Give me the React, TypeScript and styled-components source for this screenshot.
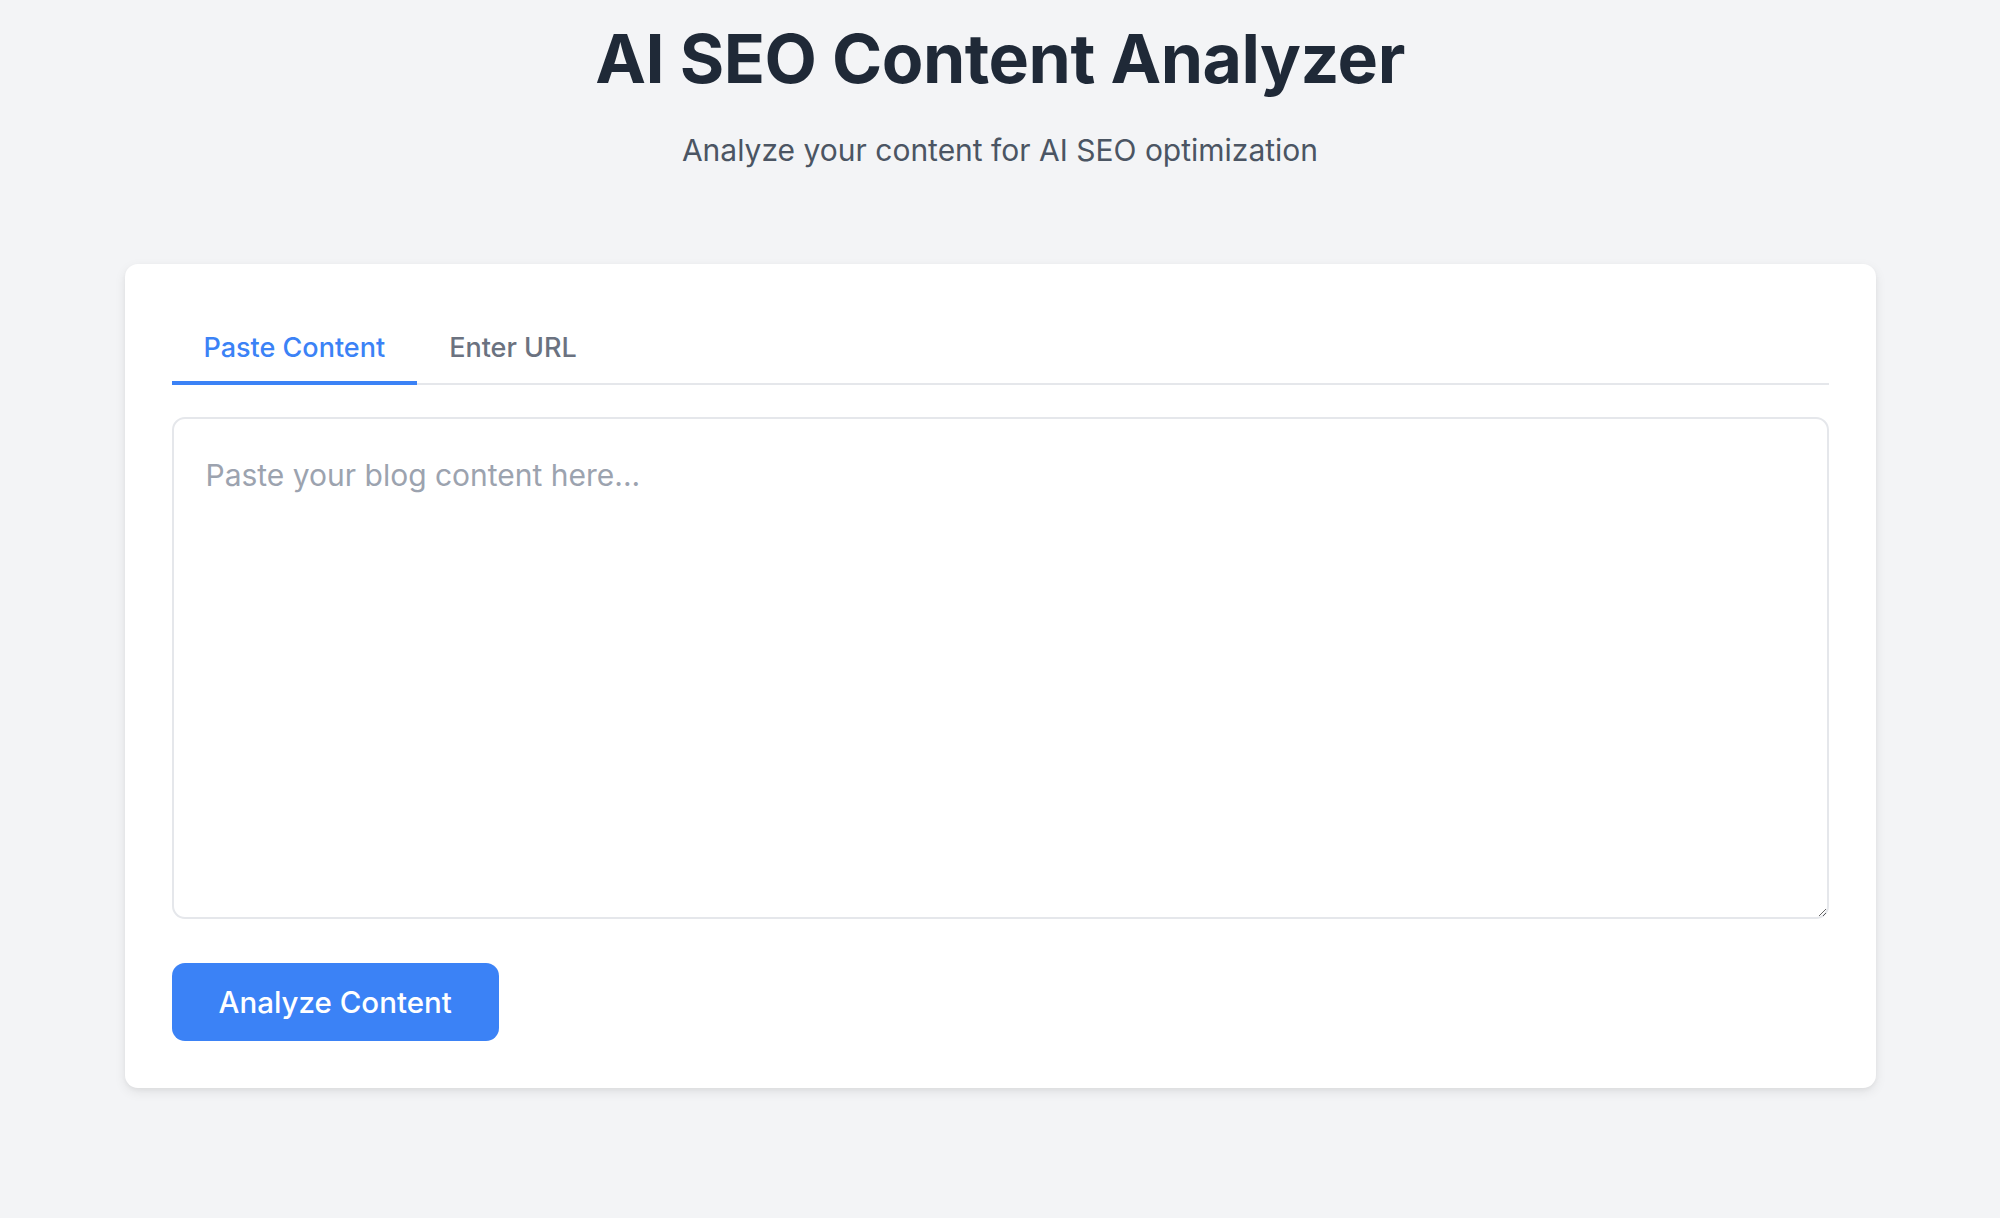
import { FC, useState } from "react";
import styled, { createGlobalStyle } from "styled-components";

const GlobalStyle = createGlobalStyle`
  html, body {
    margin: 0;
    padding: 0;
    background-color: #f3f4f6;
    font-family: Inter, "Noto Sans", "Liberation Sans", sans-serif;
  }
  * {
    box-sizing: border-box;
  }
`;

const Page = styled.div`
  min-height: 1218px;
  display: flex;
  flex-direction: column;
  align-items: center;
  padding: 16px 0 0;
`;

const Header = styled.header`
  display: flex;
  flex-direction: column;
  align-items: center;
  margin-bottom: 94px;
`;

const Title = styled.h1`
  margin: 0;
  font-size: 68px;
  line-height: 84px;
  font-weight: 700;
  letter-spacing: -0.5px;
  color: #1f2937;
`;

const Subtitle = styled.p`
  margin: 30px 0 0;
  font-size: 30px;
  line-height: 40px;
  font-weight: 400;
  color: #4b5563;
`;

const Card = styled.section`
  width: 1751px;
  background-color: #ffffff;
  border-radius: 13px;
  box-shadow: 0 4px 12px rgba(0, 0, 0, 0.08), 0 2px 4px rgba(0, 0, 0, 0.04);
  padding: 47px;
  display: flex;
  flex-direction: column;
  align-items: flex-start;
`;

const TabBar = styled.div`
  width: 100%;
  display: flex;
  border-bottom: 2px solid #e5e7eb;
  margin-bottom: 32px;
`;

const Tab = styled.button<{ $active?: boolean }>`
  appearance: none;
  background: none;
  border: none;
  margin: 0 0 -2px;
  padding: 22px 32px 18px;
  font-family: inherit;
  font-size: 27px;
  line-height: 30px;
  font-weight: 500;
  cursor: pointer;
  color: ${(p) => (p.$active ? "#3b82f6" : "#6b7280")};
  border-bottom: 4px solid ${(p) => (p.$active ? "#3b82f6" : "transparent")};
`;

const ContentArea = styled.textarea`
  width: 100%;
  height: 502px;
  border: 2px solid #e5e7eb;
  border-radius: 13px;
  padding: 34px 32px;
  font-family: inherit;
  font-size: 30px;
  line-height: 44px;
  color: #1f2937;
  resize: vertical;
  outline: none;

  &::placeholder {
    color: #9ca3af;
  }
`;

const UrlInput = styled.input`
  width: 100%;
  height: 80px;
  border: 2px solid #e5e7eb;
  border-radius: 13px;
  padding: 0 32px;
  font-family: inherit;
  font-size: 30px;
  color: #1f2937;
  outline: none;

  &::placeholder {
    color: #9ca3af;
  }
`;

const AnalyzeButton = styled.button`
  margin-top: 44px;
  height: 78px;
  padding: 0 47px;
  border: none;
  border-radius: 13px;
  background-color: #3b82f6;
  color: #ffffff;
  font-family: inherit;
  font-size: 29.5px;
  font-weight: 500;
  cursor: pointer;
`;

const App: FC = () => {
  const [mode, setMode] = useState<"paste" | "url">("paste");

  return (
    <>
      <GlobalStyle />
      <Page>
        <Header>
          <Title>AI SEO Content Analyzer</Title>
          <Subtitle>Analyze your content for AI SEO optimization</Subtitle>
        </Header>
        <Card>
          <TabBar>
            <Tab $active={mode === "paste"} onClick={() => setMode("paste")}>
              Paste Content
            </Tab>
            <Tab $active={mode === "url"} onClick={() => setMode("url")}>
              Enter URL
            </Tab>
          </TabBar>
          {mode === "paste" ? (
            <ContentArea placeholder="Paste your blog content here..." />
          ) : (
            <UrlInput placeholder="https://example.com/blog-post" />
          )}
          <AnalyzeButton>Analyze Content</AnalyzeButton>
        </Card>
      </Page>
    </>
  );
};

export default App;
